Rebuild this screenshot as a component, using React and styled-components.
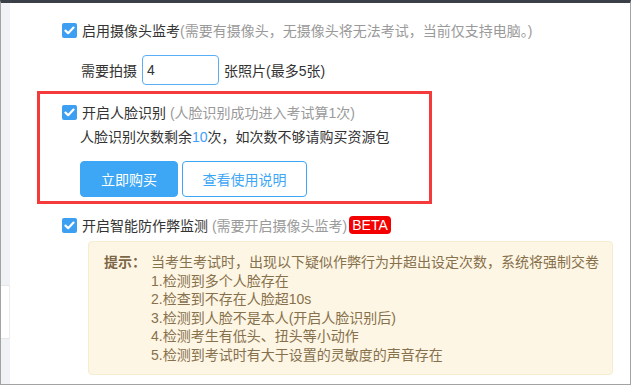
import styled, { createGlobalStyle } from "styled-components";

const GlobalStyle = createGlobalStyle`
  html, body {
    margin: 0;
    padding: 0;
    background: #fff;
  }
  body {
    font-family: "Liberation Sans", "Noto Sans CJK SC", sans-serif;
    font-size: 14px;
    color: #333;
  }
`;

const Check = () => (
  <CheckBox>
    <svg width="11" height="9" viewBox="0 0 11 9">
      <polyline points="1.5,4.6 4.2,7.2 9.5,1.6" fill="none" stroke="#fff" strokeWidth="2.2" strokeLinecap="round" strokeLinejoin="round" />
    </svg>
  </CheckBox>
);

const App = () => {
  return (
    <>
      <GlobalStyle />
      <Frame>
        <SideStrip>
          <SideItem />
        </SideStrip>
        <Main>
          <OptionRow>
            <Check />
            <Label>启用摄像头监考</Label>
            <Muted>(需要有摄像头，无摄像头将无法考试，当前仅支持电脑。)</Muted>
          </OptionRow>

          <PhotoRow>
            <span>需要拍摄</span>
            <CountInput defaultValue="4" />
            <span>张照片(最多5张)</span>
          </PhotoRow>

          <Highlight>
            <OptionRow>
              <Check />
              <Label>开启人脸识别</Label>
              <Muted>&nbsp;(人脸识别成功进入考试算1次)</Muted>
            </OptionRow>
            <InfoLine>
              人脸识别次数剩余<Blue>10</Blue>次，如次数不够请购买资源包
            </InfoLine>
            <Buttons>
              <Button $primary>立即购买</Button>
              <Button $width={125}>查看使用说明</Button>
            </Buttons>
          </Highlight>

          <OptionRow $top={11}>
            <Check />
            <Label>开启智能防作弊监测</Label>
            <Muted>&nbsp;(需要开启摄像头监考)</Muted>
            <Beta>BETA</Beta>
          </OptionRow>

          <Notice>
            <NoticeLabel>提示：</NoticeLabel>
            <NoticeList>
              <div>当考生考试时，出现以下疑似作弊行为并超出设定次数，系统将强制交卷</div>
              <div>1.检测到多个人脸存在</div>
              <div>2.检查到不存在人脸超10s</div>
              <div>3.检测到人脸不是本人(开启人脸识别后)</div>
              <div>4.检测考生有低头、扭头等小动作</div>
              <div>5.检测到考试时有大于设置的灵敏度的声音存在</div>
            </NoticeList>
          </Notice>
        </Main>
      </Frame>
    </>
  );
};
export default App;

const Frame = styled.div`
  box-sizing: border-box;
  width: 631px;
  height: 385px;
  border-top: 3px solid #3b4048;
  border-left: 1px solid #a3a3a3;
  border-right: 1px solid #a3a3a3;
  border-bottom: 1px solid #a3a3a3;
  display: flex;
  overflow: hidden;
`;

const SideStrip = styled.div`
  width: 9px;
  flex-shrink: 0;
  background: #f0f2f5;
  padding-top: 282px;
  box-sizing: border-box;
`;

const SideItem = styled.div`
  height: 52px;
  background: #fff;
  border-top: 1px solid #e6e6e6;
  border-bottom: 1px solid #e6e6e6;
  border-right: 1px solid #ececec;
`;

const Main = styled.div`
  flex: 1;
  padding: 17px 0 0 52px;
  display: flex;
  flex-direction: column;
  align-items: flex-start;
`;

const OptionRow = styled.div`
  display: flex;
  align-items: center;
  height: 20px;
  margin-top: ${(p) => p.$top || 0}px;
  white-space: nowrap;
`;

const CheckBox = styled.span`
  width: 15px;
  height: 15px;
  border-radius: 2px;
  background: #3d9ff2;
  display: inline-flex;
  align-items: center;
  justify-content: center;
  margin-right: 5px;
  flex-shrink: 0;
`;

const Label = styled.span`
  color: #333;
`;

const Muted = styled.span`
  color: #9a9a9a;
`;

const PhotoRow = styled.div`
  display: flex;
  align-items: center;
  gap: 5px;
  margin: 15px 0 0 19px;
  color: #333;
`;

const CountInput = styled.input`
  box-sizing: border-box;
  width: 77px;
  height: 30px;
  border: 1px solid #5aaef5;
  border-radius: 4px;
  padding: 0 4px;
  font-family: "Liberation Sans", sans-serif;
  font-size: 14px;
  color: #333;
  outline: none;
`;

const Highlight = styled.section`
  box-sizing: border-box;
  width: 395px;
  height: 113px;
  margin: 6px 0 0 -25px;
  border: 3px solid #f43a3a;
  padding: 8px 0 0 22px;
  display: flex;
  flex-direction: column;
  align-items: flex-start;
`;

const InfoLine = styled.div`
  margin: 5px 0 0 18px;
  height: 20px;
  line-height: 20px;
  color: #333;
`;

const Blue = styled.span`
  color: #409eff;
`;

const Buttons = styled.div`
  display: flex;
  gap: 4px;
  margin: 14px 0 0 18px;
`;

const Button = styled.button`
  box-sizing: border-box;
  width: ${(p) => p.$width || 98}px;
  height: 36px;
  border-radius: 4px;
  font-family: "Liberation Sans", "Noto Sans CJK SC", sans-serif;
  font-size: 14px;
  cursor: pointer;
  border: 1px solid #3ea7f5;
  background: ${(p) => (p.$primary ? "#3ea7f5" : "#fff")};
  color: ${(p) => (p.$primary ? "#fff" : "#3ea7f5")};
`;

const Beta = styled.span`
  margin-left: 2px;
  height: 18px;
  line-height: 18px;
  padding: 0 3px;
  background: #f50000;
  color: #fff;
  border-radius: 4px;
  font-size: 14px;
`;

const Notice = styled.div`
  box-sizing: border-box;
  width: 525px;
  height: 134px;
  margin: 6px 0 0 26px;
  padding: 11px 10px 0 15px;
  background: #fdf6e4;
  border: 1px solid #f6ecd2;
  border-radius: 4px;
  display: flex;
  line-height: 18.6px;
  color: #87704c;
`;

const NoticeLabel = styled.div`
  width: 47px;
  flex-shrink: 0;
  font-weight: bold;
  color: #7c6645;
`;

const NoticeList = styled.div`
  white-space: nowrap;
`;
